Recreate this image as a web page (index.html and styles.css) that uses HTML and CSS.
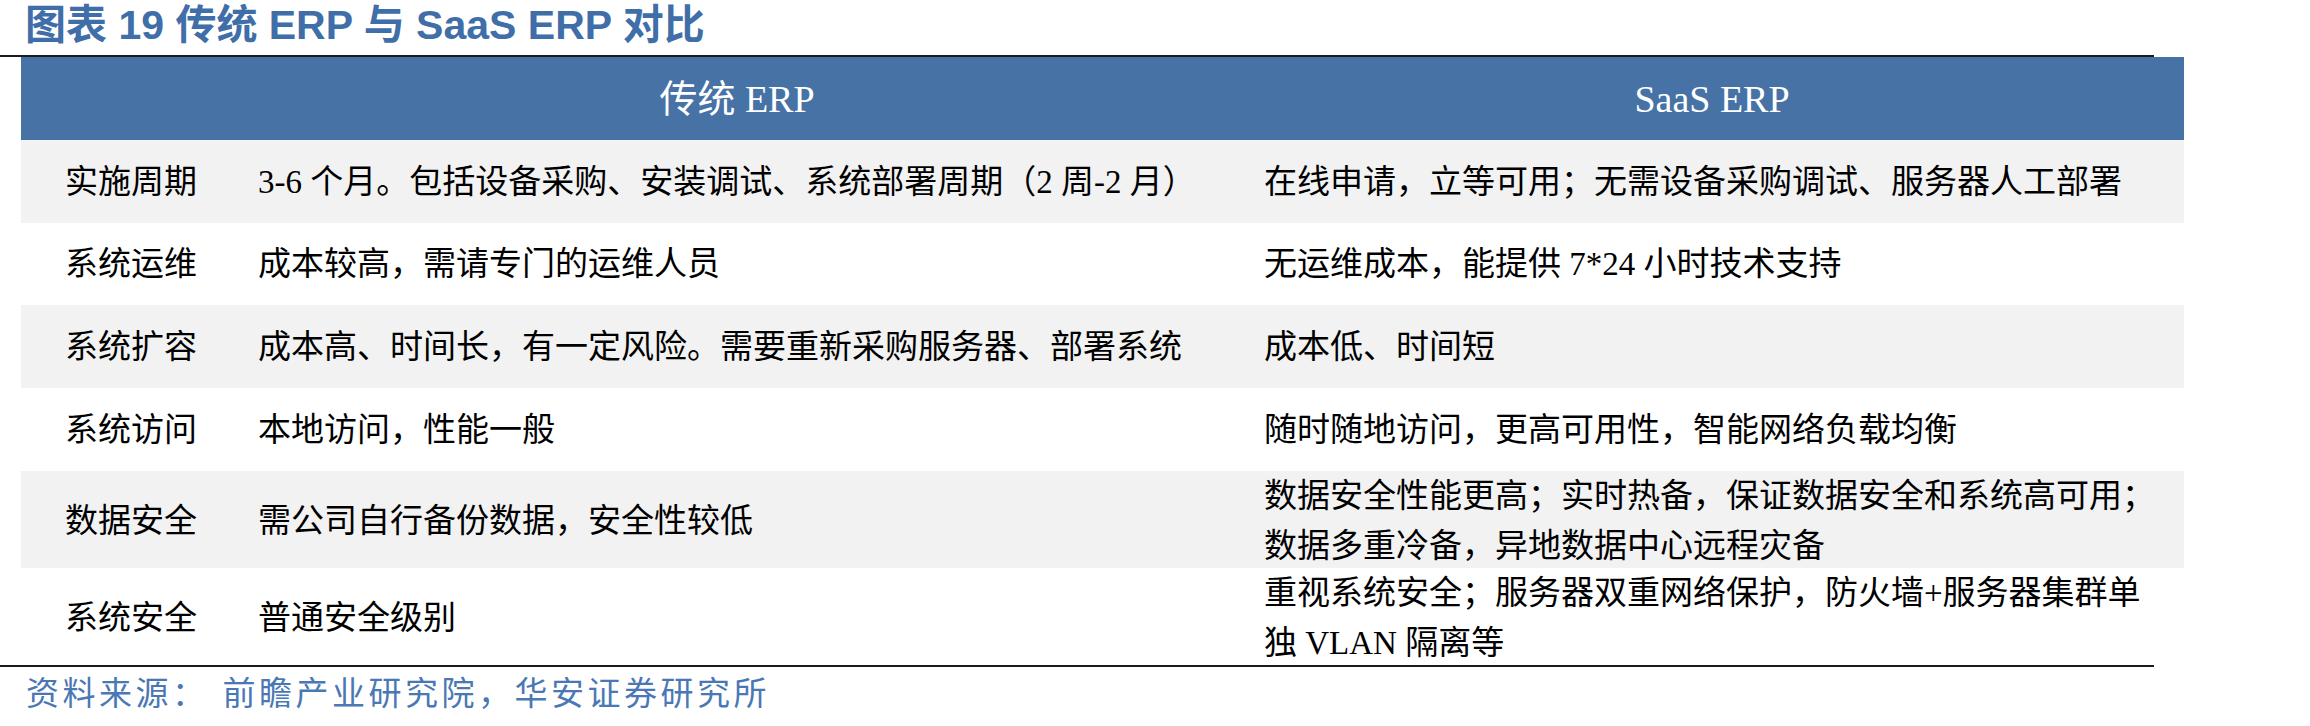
FILE: index.html
```html
<!DOCTYPE html>
<html lang="zh-CN">
<head>
<meta charset="utf-8">
<title>图表 19 传统 ERP 与 SaaS ERP 对比</title>
<link rel="stylesheet" href="styles.css">
</head>
<body>
<div class="page">
  <h1 class="title">图表 19 传统 ERP 与 SaaS ERP 对比</h1>
  <div class="rule"></div>
  <div class="table">
    <div class="row head">
      <div class="cell c1"></div>
      <div class="cell c2">传统 ERP</div>
      <div class="cell c3">SaaS ERP</div>
    </div>
    <div class="row alt">
      <div class="cell c1">实施周期</div>
      <div class="cell c2">3-6 个月。包括设备采购、安装调试、系统部署周期（2 周-2 月）</div>
      <div class="cell c3">在线申请，立等可用；无需设备采购调试、服务器人工部署</div>
    </div>
    <div class="row short">
      <div class="cell c1">系统运维</div>
      <div class="cell c2">成本较高，需请专门的运维人员</div>
      <div class="cell c3">无运维成本，能提供 7*24 小时技术支持</div>
    </div>
    <div class="row alt">
      <div class="cell c1">系统扩容</div>
      <div class="cell c2">成本高、时间长，有一定风险。需要重新采购服务器、部署系统</div>
      <div class="cell c3">成本低、时间短</div>
    </div>
    <div class="row">
      <div class="cell c1">系统访问</div>
      <div class="cell c2">本地访问，性能一般</div>
      <div class="cell c3">随时随地访问，更高可用性，智能网络负载均衡</div>
    </div>
    <div class="row alt tall">
      <div class="cell c1">数据安全</div>
      <div class="cell c2">需公司自行备份数据，安全性较低</div>
      <div class="cell c3 multi">数据安全性能更高；实时热备，保证数据安全和系统高可用；<br>数据多重冷备，异地数据中心远程灾备</div>
    </div>
    <div class="row tall">
      <div class="cell c1">系统安全</div>
      <div class="cell c2">普通安全级别</div>
      <div class="cell c3 multi">重视系统安全；服务器双重网络保护，防火墙+服务器集群单<br>独 VLAN 隔离等</div>
    </div>
  </div>
  <div class="rule"></div>
  <p class="source"><span class="src-label">资料来源：</span>前瞻产业研究院，华安证券研究所</p>
</div>
</body>
</html>
```

FILE: styles.css
```css
html, body {
  margin: 0;
  padding: 0;
  background: #ffffff;
}

.page {
  width: 2310px;
  height: 726px;
  overflow: hidden;
}

.title {
  margin: 0;
  height: 55px;
  padding-left: 25px;
  box-sizing: border-box;
  font-family: "Liberation Sans", "Noto Sans CJK SC", sans-serif;
  font-weight: bold;
  font-size: 41px;
  line-height: 51px;
  color: #3f6ea9;
  white-space: nowrap;
}

.rule {
  width: 2154px;
  height: 2px;
  background: #1b1b1b;
}

.table {
  margin-left: 21px;
  width: 2163px;
  font-family: "Liberation Serif", "Noto Sans CJK SC", serif;
  font-size: 33px;
  color: #000000;
}

.row {
  display: grid;
  grid-template-columns: 213px 1006px 944px;
  height: 83px;
}

.row.short {
  height: 82px;
}

.row.tall {
  height: 97px;
}

.row.alt {
  background: #f2f2f2;
}

.row.head {
  background: #4672a5;
  color: #ffffff;
  font-size: 38px;
}

.cell {
  display: flex;
  align-items: center;
  white-space: nowrap;
  line-height: 40px;
}

.row.head .cell {
  justify-content: center;
}

.cell.c1 {
  padding-left: 44px;
}

.cell.c2,
.cell.c3 {
  padding-left: 24px;
}

.row.head .cell.c2,
.row.head .cell.c3 {
  padding-left: 0;
}

.cell.multi {
  line-height: 50px;
}

.source {
  margin: 7px 0 0 0;
  padding-left: 26px;
  font-family: "Liberation Serif", "Noto Sans CJK SC", serif;
  font-size: 33px;
  line-height: 40px;
  letter-spacing: 3.5px;
  color: #4a78b4;
  white-space: nowrap;
}

.src-label {
  margin-right: 14px;
}
```
